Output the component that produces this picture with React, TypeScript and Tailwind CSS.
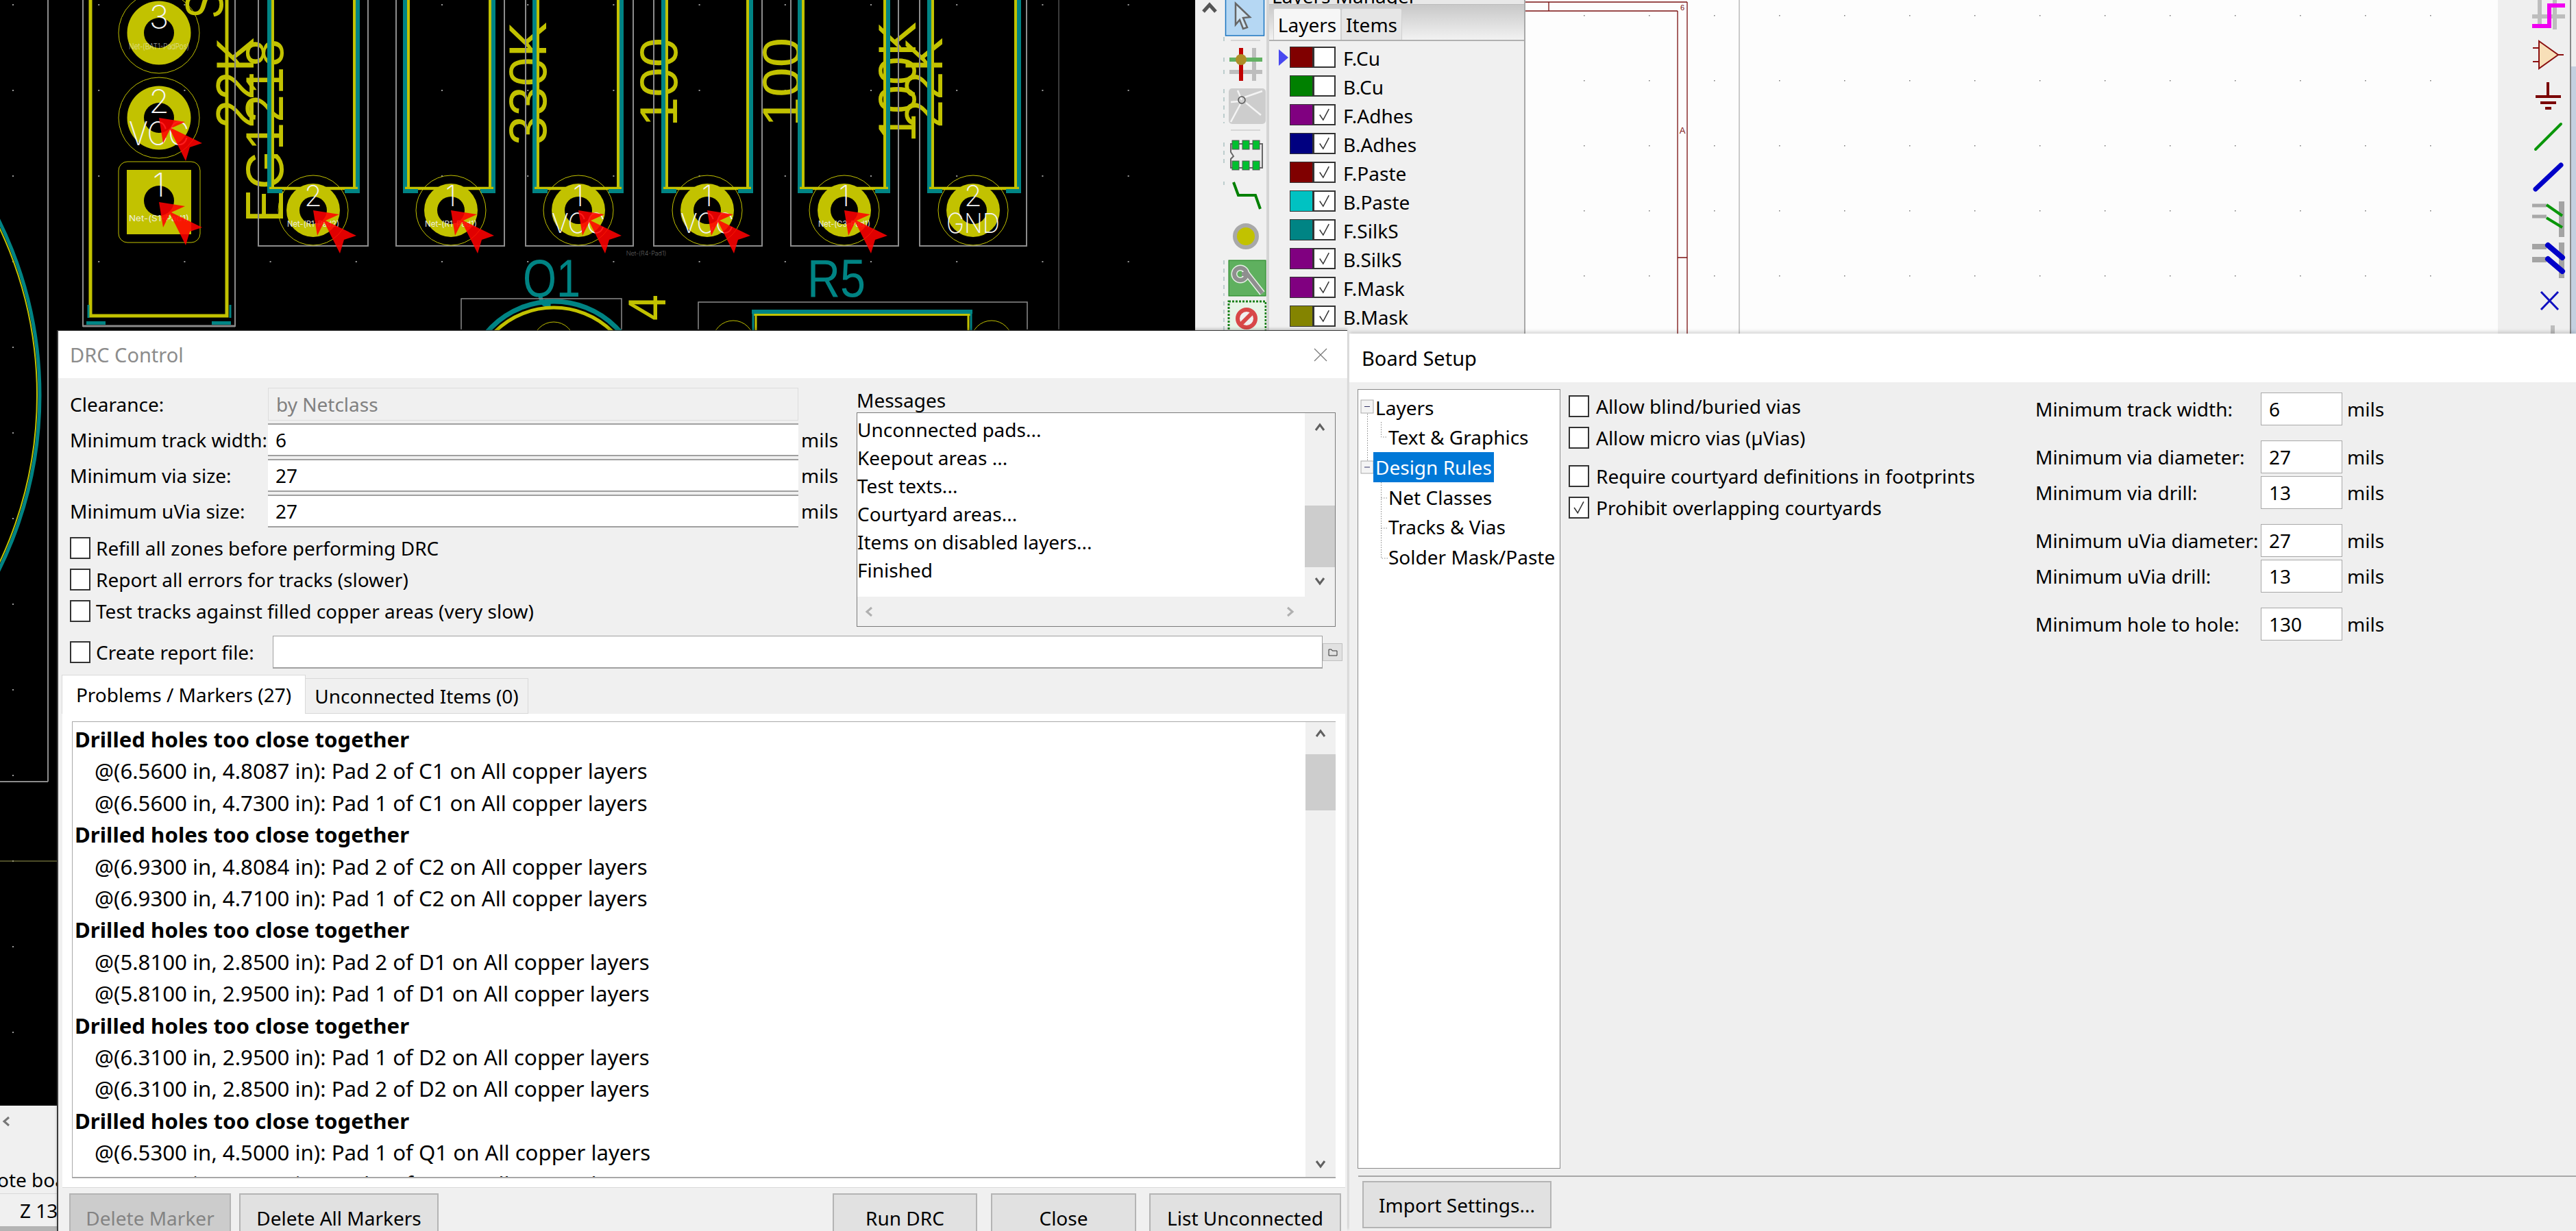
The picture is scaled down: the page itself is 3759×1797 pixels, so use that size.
import React from 'react';

// ---- PCB canvas ----

const YEL = '#c2c200';
const TEAL = '#008484';

const gridX = Array.from({ length: 14 }, (_, i) => 19 + i * 125.2);
const gridY = Array.from({ length: 13 }, (_, i) => 7 + i * 125);

const ROW_PADS = [
  { cx: 457, num: '2', net: 'Net-(R1-Pad2)', marker: true },
  { cx: 658, num: '1', net: 'Net-(R1-Pad1)', marker: true },
  { cx: 844, num: '1', big: 'VCC', marker: true },
  { cx: 1032, num: '1', big: 'VCC', marker: true },
  { cx: 1232, num: '1', net: 'Net-(C3-Pad1)', marker: true },
  { cx: 1420, num: '2', big: 'GND', marker: false },
];

const COURTS = [
  [377, 537],
  [578, 736],
  [767, 924],
  [954, 1112],
  [1154, 1311],
  [1342, 1498],
];

const SILK = [
  [393, 522],
  [591, 720],
  [780, 907],
  [968, 1096],
  [1167, 1296],
  [1356, 1487],
];

function Marker({ x, y }: { x: number; y: number }) {
  return (
    <polygon
      transform={`translate(${x} ${y})`}
      points="0,0 38,6 18,15 63,37 45,43 39,63 16,17 6,37"
      fill="#ff0000"
      fillOpacity="0.88"
    />
  );
}

function SilkLabel({ t, x, y, len }: { t: string; x: number; y: number; len: number }) {
  return (
    <text
      transform={`translate(${x} ${y}) rotate(-90)`}
      fontFamily="Liberation Sans"
      fontSize="78"
      fill={YEL}
      textLength={len}
      lengthAdjust="spacingAndGlyphs"
    >
      {t}
    </text>
  );
}

function PcbCanvas() {
  return (
    <svg width="1744" height="1614" className="block bg-black">
      {gridX.map((x) =>
        gridY.map((y) => <rect key={`${x}-${y}`} x={x - 1} y={y - 1} width="2" height="2" fill="#999" />),
      )}

      {/* board edge and courtyards */}
      <line x1="70" y1="0" x2="70" y2="1141" stroke="#8c8c8c" strokeWidth="2" />
      <line x1="0" y1="1141" x2="70" y2="1141" stroke="#8c8c8c" strokeWidth="2" />
      <line x1="0" y1="1257" x2="85" y2="1257" stroke="#9a9a50" strokeWidth="1" />
      <line x1="1545" y1="0" x2="1545" y2="481" stroke="#777" strokeWidth="1" />
      <circle cx="-518" cy="577" r="576" fill="none" stroke={TEAL} strokeWidth="5" />
      <circle cx="-518" cy="577" r="572" fill="none" stroke={YEL} strokeWidth="2" />

      {/* silk text, under the outlines */}
      <SilkLabel t="EG1218" x={413} y={325} len={268} />
      <SilkLabel t="22K" x={370} y={187} len={132} />
      <SilkLabel t="S" x={325} y={27} len={40} />
      <SilkLabel t="330K" x={797} y={212} len={180} />
      <SilkLabel t="100" x={988} y={185} len={130} />
      <SilkLabel t="100" x={1167} y={185} len={130} />
      <SilkLabel t="100K" x={1336} y={208} len={176} />
      <SilkLabel t="22K" x={1375} y={187} len={132} />
      <SilkLabel t="4" x={971} y={468} len={38} />

      {/* connector */}
      <path d="M121 0V476H343V0" fill="none" stroke="#8c8c8c" strokeWidth="2" />
      <line x1="121" y1="476" x2="343" y2="476" stroke="#8c8c8c" strokeWidth="3" />
      <path d="M132 0V461H331V0" fill="none" stroke={YEL} strokeWidth="5" />
      <rect x="126" y="469" width="28" height="5" fill={TEAL} />
      <rect x="309" y="469" width="28" height="5" fill={TEAL} />
      <path d="M129 445V464M336 445V464" stroke={TEAL} strokeWidth="3" />

      {[48, 172].map((cy) => (
        <g key={cy}>
          <circle cx="232" cy={cy} r="59" fill="none" stroke={YEL} strokeWidth="1" />
          <circle cx="232" cy={cy} r="46.5" fill={YEL} />
          <circle cx="232" cy={cy} r="22" fill="#000" />
        </g>
      ))}
      <rect x="173" y="236" width="119" height="118" rx="13" fill="none" stroke={YEL} strokeWidth="1" />
      <rect x="185" y="248" width="94" height="94" fill={YEL} />
      <circle cx="232" cy="293" r="22" fill="#000" />

      {/* silkscreen outlines */}
      {SILK.map(([l, r]) => (
        <g key={l}>
          <path d={`M${l} 0V281M${r} 0V281`} stroke={TEAL} strokeWidth="6" />
          <path d={`M${l + 5} 0V275M${r - 5} 0V275`} stroke={YEL} strokeWidth="4" />
          <line x1={l} y1="275" x2={r} y2="275" stroke={YEL} strokeWidth="4.5" />
          <rect x={l - 3} y="276" width="22" height="6" fill={TEAL} />
          <rect x={r - 19} y="276" width="22" height="6" fill={TEAL} />
        </g>
      ))}

      {/* resistor courtyards */}
      {COURTS.map(([l, r]) => (
        <path key={l} d={`M${l} 0V359H${r}V0`} fill="none" stroke="#8c8c8c" strokeWidth="2" />
      ))}

      {/* pads */}
      {ROW_PADS.map((p) => (
        <g key={p.cx}>
          <circle cx={p.cx} cy="307" r="51" fill="none" stroke={YEL} strokeWidth="1" />
          <circle cx={p.cx} cy="307" r="39" fill={YEL} />
          <circle cx={p.cx} cy="307" r="20" fill="#000" />
        </g>
      ))}

      {/* pad labels */}
      <g fontFamily="Inter, Liberation Sans" fontWeight="200" fill="#f4f4f4" textAnchor="middle">
        <text x="232" y="42" fontSize="48">3</text>
        <text x="232" y="72" fontSize="12" textLength="88" lengthAdjust="spacingAndGlyphs" opacity="0.85">Net-(BAT1-PadPos)</text>
        <text x="232" y="165" fontSize="48">2</text>
        <text x="232" y="212" fontSize="48" textLength="88" lengthAdjust="spacingAndGlyphs">VCC</text>
        <text x="232" y="287" fontSize="48">1</text>
        <text x="232" y="323" fontSize="12" fontWeight="400" textLength="88" lengthAdjust="spacingAndGlyphs" opacity="0.9">Net-(S1-Pad1)</text>
        {ROW_PADS.map((p) => (
          <g key={p.cx}>
            <text x={p.cx} y="301" fontSize="42">{p.num}</text>
            {p.net && <text x={p.cx} y="331" fontSize="12" fontWeight="400" textLength="76" lengthAdjust="spacingAndGlyphs" opacity="0.9">{p.net}</text>}
            {p.big && (
              <text x={p.cx} y="340" fontSize="40" textLength="78" lengthAdjust="spacingAndGlyphs">{p.big}</text>
            )}
          </g>
        ))}
        <text x="943" y="373" fontSize="9" opacity="0.5">Net-(R4-Pad1)</text>
      </g>

      {/* markers */}
      <Marker x={232} y={172} />
      <Marker x={232} y={295} />
      {ROW_PADS.filter((p) => p.marker).map((p) => (
        <Marker key={p.cx} x={p.cx} y={307} />
      ))}

      {/* Q1 / R5 */}
      <g fontFamily="Liberation Sans" fontSize="78" fill={TEAL}>
        <text x="763" y="433" textLength="84" lengthAdjust="spacingAndGlyphs">Q1</text>
        <text x="1178" y="433" textLength="85" lengthAdjust="spacingAndGlyphs">R5</text>
      </g>
      <path d="M673 481V436H907V481" fill="none" stroke="#8c8c8c" strokeWidth="1.5" />
      <path d="M1019 481V441H1499V481" fill="none" stroke="#8c8c8c" strokeWidth="1.5" />
      <circle cx="808" cy="568" r="128" fill="none" stroke={TEAL} strokeWidth="7" />
      <circle cx="808" cy="571" r="122" fill="none" stroke={YEL} strokeWidth="5" />
      <circle cx="808" cy="500" r="30" fill="none" stroke={YEL} strokeWidth="1" />
      <rect x="1097" y="452" width="322" height="6" fill={TEAL} />
      <rect x="1099" y="458" width="318" height="3" fill={YEL} />
      <path d="M1099 455V482M1417 455V482" stroke={TEAL} strokeWidth="3" />
      <path d="M1103 461V482M1413 461V482" stroke={YEL} strokeWidth="3" />
      <circle cx="1070" cy="498" r="30" fill="none" stroke={YEL} strokeWidth="1" />
      <circle cx="1447" cy="498" r="30" fill="none" stroke={YEL} strokeWidth="1" />
    </svg>
  );
}

// ---- toolbars ----

function LeftToolbar() {
  return (
    <div className="flex h-full w-[108px] shrink-0 flex-col border-r-4 border-[#d4d4d4] bg-[#f0f0f0]">
      <svg width="104" height="487" viewBox="0 0 104 487">
        <path d="M12 17L21 7L30 17" fill="none" stroke="#555" strokeWidth="5" />
        <path d="M42 60V54M42 84V90M42 102V108M42 130V180M42 208V240M42 265V270M42 380V432M42 440V482" stroke="#8aa" strokeWidth="1" strokeDasharray="6 6" fill="none" />
        <rect x="44.5" y="-2" width="56" height="54" fill="#b5d7f3" stroke="#1b74c0" strokeWidth="1.5" />
        <path d="M59 5L80 25L70 26L76 40L70 42L65 29L59 36Z" fill="#cfe3f2" stroke="#666" strokeWidth="2.5" />
        <line x1="52" y1="59" x2="95" y2="59" stroke="#bbb" />
        <line x1="52" y1="190" x2="95" y2="190" stroke="#bbb" />
        <rect x="83" y="70" width="6" height="48" fill="#bdbdbd" />
        <rect x="50" y="102" width="48" height="6" fill="#bdbdbd" />
        <rect x="50" y="84" width="48" height="6" fill="#62b162" />
        <rect x="64" y="70" width="6" height="48" fill="#c00000" />
        <circle cx="67" cy="87" r="8" fill="#ac8e28" />
        <rect x="49" y="129" width="54" height="52" rx="5" fill="#cdcdcd" />
        <path d="M68 146L62 132M72 142L98 133M74 150L96 168M66 152L52 178M64 148L52 149" stroke="#f4f4f4" strokeWidth="2.5" />
        <circle cx="68" cy="146" r="5" fill="none" stroke="#555" strokeWidth="1.5" />
        <path d="M52 210H98V245H52V232L56 228L52 222Z" fill="#ececec" stroke="#666" strokeWidth="2" />
        <rect x="54" y="205" width="10" height="13" fill="#00c030" stroke="#555" />
        <rect x="69" y="205" width="10" height="13" fill="#00c030" stroke="#555" />
        <rect x="84" y="205" width="10" height="13" fill="#00c030" stroke="#555" />
        <rect x="54" y="235" width="10" height="13" fill="#00c030" stroke="#555" />
        <rect x="69" y="235" width="10" height="13" fill="#00c030" stroke="#555" />
        <rect x="84" y="235" width="10" height="13" fill="#00c030" stroke="#555" />
        <path d="M56 266L63 285H88L95 305" fill="none" stroke="#008000" strokeWidth="4" />
        <circle cx="74" cy="345" r="16" fill="#c2c200" stroke="#a8a8a8" strokeWidth="6" />
        <rect x="49" y="380" width="54" height="52" fill="#5fb05f" stroke="#188018" />
        <path d="M98 428L76 400H68" fill="none" stroke="#e6f2e6" strokeWidth="9" />
        <circle cx="66" cy="400" r="9" fill="none" stroke="#e6f2e6" strokeWidth="9" />
        <path d="M98 428L76 400H68" fill="none" stroke="#8f8f8f" strokeWidth="6" />
        <circle cx="66" cy="400" r="9" fill="none" stroke="#8f8f8f" strokeWidth="6" />
        <rect x="49" y="440" width="54" height="44" fill="#e8f4e8" stroke="#188018" strokeWidth="3" strokeDasharray="3 2" />
        <circle cx="75" cy="465" r="13" fill="#f0f0f0" stroke="#d84848" strokeWidth="6" />
        <line x1="66" y1="474" x2="84" y2="456" stroke="#d84848" strokeWidth="6" />
      </svg>
    </div>
  );
}

const LAYERS = [
  { name: 'F.Cu', color: 'bg-[#800000]', on: false },
  { name: 'B.Cu', color: 'bg-[#008000]', on: false },
  { name: 'F.Adhes', color: 'bg-[#800080]', on: true },
  { name: 'B.Adhes', color: 'bg-[#000080]', on: true },
  { name: 'F.Paste', color: 'bg-[#800000]', on: true },
  { name: 'B.Paste', color: 'bg-[#00c2c2]', on: true },
  { name: 'F.SilkS', color: 'bg-[#008484]', on: true },
  { name: 'B.SilkS', color: 'bg-[#800080]', on: true },
  { name: 'F.Mask', color: 'bg-[#800080]', on: true },
  { name: 'B.Mask', color: 'bg-[#848400]', on: true },
];

function TickMark() {
  return (
    <svg viewBox="0 0 30 32" className="h-full w-full">
      <path d="M7 16L13 25L23 6" fill="none" stroke="#333" strokeWidth="1.8" />
    </svg>
  );
}

function LayersManager() {
  return (
    <div className="flex h-full w-[374px] shrink-0 flex-col border-r-2 border-[#a8a8a8] bg-[#f0f0f0]">
      <div className="h-[7px] overflow-hidden border-b border-[#bbb] bg-[#e8e8e8] pl-[4px]">
        <div className="-mt-[20px] text-black">Layers Manager</div>
      </div>
      <div className="flex h-[53px] items-end gap-0 border-b-2 border-[#b0b0b0] bg-gradient-to-b from-[#c8c8c8] to-[#f2f2f2] pl-[6px]">
        <div className="flex h-[46px] w-[99px] items-center justify-center rounded-t-[3px] border border-b-0 border-[#d0d0d0] bg-[#f6f6f6]">Layers</div>
        <div className="flex h-[46px] w-[89px] items-center justify-center rounded-t-[3px] border border-b-0 border-[#d0d0d0] bg-[#e6e6e6]">Items</div>
      </div>
      <div className="flex flex-col gap-[11px] pt-[8px]">
        {LAYERS.map((l, i) => (
          <div key={l.name} className="flex h-[31px] items-center">
            <div className="flex w-[30px] justify-end pr-[2px]">
              {i === 0 && (
                <svg width="14" height="24">
                  <path d="M0 0L14 12L0 24Z" fill="#4848f0" />
                </svg>
              )}
            </div>
            <div className={`h-[31px] w-[34px] border border-[#333] ${l.color}`} />
            <div className="h-[31px] w-[33px] border-2 border-[#333] bg-white">{l.on && <TickMark />}</div>
            <span className="ml-[11px] translate-y-[1px]">{l.name}</span>
          </div>
        ))}
      </div>
    </div>
  );
}

const sheetDotsX = Array.from({ length: 14 }, (_, i) => 85 + i * 95);
const sheetDotsY = [22, 117, 212, 307, 402];

function SheetArea() {
  return (
    <div className="h-full w-[1419px] shrink-0 bg-[#fdfdfd]">
      <svg width="1419" height="487" className="block">
        {sheetDotsX.map((x) =>
          sheetDotsY.map((y) => <rect key={`${x}-${y}`} x={x} y={y} width="1.5" height="1.5" fill="#777" />),
        )}
        <path d="M0 3H236M0 16H222M34 3V16M222 16V487M236 3V487M222 376H236" fill="none" stroke="#7a1010" strokeWidth="1.3" />
        <line x1="312" y1="0" x2="312" y2="487" stroke="#999" strokeWidth="1" />
        <text x="229" y="15" fontSize="11" textAnchor="middle" fill="#7a1010" fontFamily="Liberation Sans">6</text>
        <text x="229" y="195" fontSize="13" textAnchor="middle" fill="#7a1010" fontFamily="Liberation Sans">A</text>
      </svg>
    </div>
  );
}

function RightToolbar() {
  return (
    <div className="flex h-full flex-1 bg-[#efefef]">
      <svg width="105" height="487" className="shrink-0">
        <g transform="translate(-3645 0)">
          <path d="M3706 0V40M3728 0V43M3695 24H3743" stroke="#bdbdbd" strokeWidth="6" fill="none" />
          <path d="M3695 38H3720V8H3743" stroke="#f000f0" strokeWidth="6" fill="none" />
          <path d="M3696 70H3706M3696 90H3706M3733 80H3741" stroke="#8b1010" strokeWidth="2" />
          <path d="M3705 60L3733 80L3705 100Z" fill="#f8dfb8" stroke="#8b1010" strokeWidth="2" />
          <path d="M3718 120V141" stroke="#7a0000" strokeWidth="4" />
          <path d="M3700 141H3737M3707 150H3730M3714 158H3723" stroke="#7a0000" strokeWidth="4" />
          <line x1="3700" y1="218" x2="3737" y2="181" stroke="#0a960a" strokeWidth="4" strokeLinecap="round" />
          <line x1="3700" y1="276" x2="3737" y2="241" stroke="#0000c8" strokeWidth="7" strokeLinecap="round" />
          <path d="M3695 300H3716M3695 316H3716" stroke="#a8a8a8" strokeWidth="5" />
          <rect x="3734" y="294" width="8" height="52" fill="#a4a4a4" />
          <path d="M3716 299L3739 315M3716 318L3739 332" stroke="#0a960a" strokeWidth="4" />
          <path d="M3695 360H3716M3695 379H3716" stroke="#a4a4a4" strokeWidth="8" />
          <rect x="3734" y="354" width="8" height="52" fill="#a4a4a4" />
          <path d="M3718 358L3739 376M3718 378L3739 396" stroke="#0000c8" strokeWidth="8" strokeLinecap="round" />
          <path d="M3708 426L3733 452M3733 426L3708 452" stroke="#1010c0" strokeWidth="3" />
          <rect x="3722" y="475" width="6" height="12" fill="#bcbcbc" />
        </g>
      </svg>
      <div className="h-full w-[2px] bg-[#8a8a8a]" />
      <div className="flex h-full flex-1 flex-col">
        <div className="h-[97px] bg-[#efefef]" />
        <div className="flex-1 bg-[#c4d0e0]" />
      </div>
    </div>
  );
}

// ---- shared dialog bits ----

function CheckBox({ checked = false }: { checked?: boolean }) {
  return (
    <div className="h-[32px] w-[30px] shrink-0 border-2 border-[#333] bg-white">{checked && <TickMark />}</div>
  );
}

function CheckRow({ label, checked, labelGap = 'ml-[8px]' }: { label: string; checked?: boolean; labelGap?: string }) {
  return (
    <div className="flex h-[32px] items-center">
      <CheckBox checked={checked} />
      <span className={`whitespace-nowrap ${labelGap}`}>{label}</span>
    </div>
  );
}

function Chev({ dir, color = '#606060' }: { dir: 'up' | 'down' | 'left' | 'right'; color?: string }) {
  const d = {
    up: 'M2 11L8 3L14 11',
    down: 'M2 3L8 11L14 3',
    left: 'M11 2L4 8L11 14',
    right: 'M5 2L12 8L5 14',
  }[dir];
  return (
    <svg width="16" height="16" viewBox="0 0 16 16" className="block">
      <path d={d} fill="none" stroke={color} strokeWidth="3" />
    </svg>
  );
}

function Btn({ label, className = '', disabled = false }: { label: string; className?: string; disabled?: boolean }) {
  return (
    <div
      className={`flex h-[72px] shrink-0 items-center justify-center border-2 border-[#b4b4b4] ${
        disabled ? 'bg-[#cccccc] text-[#838383]' : 'bg-[#e1e1e1] text-black'
      } ${className}`}
    >
      {label}
    </div>
  );
}

// ---- DRC Control ----

function DrcField({ label, value, disabled = false }: { label: string; value: string; disabled?: boolean }) {
  return (
    <div className="flex h-[48px] items-center">
      <span className="w-[289px] shrink-0 whitespace-nowrap">{label}</span>
      <div
        className={`flex h-full w-[774px] items-center pl-[11px] ${
          disabled
            ? 'border border-[#dcdcdc] bg-[#f0f0f0] text-[#808080]'
            : 'border-b-2 border-t-2 border-[#a0a0a0] bg-white'
        }`}
      >
        {value}
      </div>
      {!disabled && <span className="ml-[4px]">mils</span>}
    </div>
  );
}

const MESSAGES = ['Unconnected pads...', 'Keepout areas ...', 'Test texts...', 'Courtyard areas...', 'Items on disabled layers...', 'Finished'];

const MARKERS = [
  ['@(6.5600 in, 4.8087 in): Pad 2 of C1 on All copper layers', '@(6.5600 in, 4.7300 in): Pad 1 of C1 on All copper layers'],
  ['@(6.9300 in, 4.8084 in): Pad 2 of C2 on All copper layers', '@(6.9300 in, 4.7100 in): Pad 1 of C2 on All copper layers'],
  ['@(5.8100 in, 2.8500 in): Pad 2 of D1 on All copper layers', '@(5.8100 in, 2.9500 in): Pad 1 of D1 on All copper layers'],
  ['@(6.3100 in, 2.9500 in): Pad 1 of D2 on All copper layers', '@(6.3100 in, 2.8500 in): Pad 2 of D2 on All copper layers'],
  ['@(6.5300 in, 4.5000 in): Pad 1 of Q1 on All copper layers', '@(6.5300 in, 4.4000 in): Pad 2 of Q1 on All copper layers'],
];

function DrcDialog() {
  return (
    <div className="absolute left-[83px] top-[482px] flex h-[1315px] w-[1883px] flex-col overflow-hidden border-l-2 border-t border-[#3a3a3a] bg-[#f0f0f0] shadow-[0_-2px_4px_rgba(0,0,0,0.2)]">
      <div className="flex h-[69px] shrink-0 items-center justify-between bg-white pl-[17px] pr-[28px] text-[29px] text-[#8c8c8c]">
        <span>DRC Control</span>
        <svg width="22" height="22">
          <path d="M2 2L20 20M20 2L2 20" stroke="#777" strokeWidth="1.2" />
        </svg>
      </div>

      <div className="flex shrink-0 items-start pl-[17px] pt-[14px]">
        <div className="flex w-[1148px] shrink-0 flex-col">
          <div className="flex flex-col gap-[4px]">
            <DrcField label="Clearance:" value="by Netclass" disabled />
            <DrcField label="Minimum track width:" value="6" />
            <DrcField label="Minimum via size:" value="27" />
            <DrcField label="Minimum uVia size:" value="27" />
          </div>
          <div className="mt-[14px] flex flex-col gap-[14px]">
            <CheckRow label="Refill all zones before performing DRC" />
            <CheckRow label="Report all errors for tracks (slower)" />
            <CheckRow label="Test tracks against filled copper areas (very slow)" />
          </div>
        </div>
        <div className="flex flex-col">
          <div className="flex h-[36px] items-center">Messages</div>
          <div className="flex h-[313px] w-[699px] flex-col border border-[#7a7a7a] bg-white">
            <div className="flex h-[268px] shrink-0">
              <div className="flex-1 pt-[4px]">
                {MESSAGES.map((m) => (
                  <div key={m} className="h-[41px] leading-[41px]">{m}</div>
                ))}
              </div>
              <div className="relative flex w-[44px] flex-col items-center justify-between bg-[#f0f0f0] py-[14px]">
                <Chev dir="up" />
                <div className="absolute left-0 top-[135px] h-[90px] w-full bg-[#cdcdcd]" />
                <Chev dir="down" />
              </div>
            </div>
            <div className="flex flex-1 items-center justify-between bg-[#f0f0f0] pl-[10px] pr-[58px]">
              <Chev dir="left" color="#b0b0b0" />
              <Chev dir="right" color="#b0b0b0" />
            </div>
          </div>
        </div>
      </div>

      <div className="mt-[13px] flex h-[48px] shrink-0 items-center pl-[17px]">
        <div className="w-[296px] shrink-0">
          <CheckRow label="Create report file:" />
        </div>
        <div className="h-full w-[1532px] shrink-0 border border-b-2 border-[#a0a0a0] bg-white" />
        <div className="flex h-[26px] w-[29px] shrink-0 items-center justify-center border border-[#c0c0c0] bg-[#e1e1e1]">
          <svg width="14" height="12">
            <path d="M1 2H5L6 4H13V11H1Z" fill="none" stroke="#333" />
          </svg>
        </div>
      </div>

      <div className="mt-[9px] flex h-[57px] shrink-0 items-end pl-[5px]">
        <div className="flex h-[57px] w-[356px] items-center justify-center border border-b-0 border-[#d9d9d9] bg-white">
          Problems / Markers (27)
        </div>
        <div className="flex h-[52px] w-[325px] items-center justify-center border border-l-0 border-[#d9d9d9] bg-[#f0f0f0]">
          Unconnected Items (0)
        </div>
      </div>

      <div className="ml-[6px] mr-[3px] h-[692px] shrink-0 border-b border-[#d9d9d9] bg-white px-[14px] pt-[11px]">
        <div className="flex h-[667px] overflow-hidden border-b-2 border-l border-t border-[#a8a8a8]">
          <div className="flex-1 overflow-hidden pt-[2px] text-[31.2px]">
            {MARKERS.map((pair, i) => (
              <div key={i}>
                <div className="h-[46.4px] whitespace-nowrap pl-[3px] font-bold leading-[46.4px]">Drilled holes too close together</div>
                {pair.map((p) => (
                  <div key={p} className="h-[46.4px] whitespace-nowrap pl-[32px] leading-[46.4px]">{p}</div>
                ))}
              </div>
            ))}
          </div>
          <div className="relative flex w-[44px] shrink-0 flex-col items-center justify-between bg-[#f0f0f0] py-[10px]">
            <Chev dir="up" />
            <div className="absolute left-0 top-[47px] h-[82px] w-full bg-[#cdcdcd]" />
            <Chev dir="down" />
          </div>
        </div>
      </div>

      <div className="mt-[8px] flex shrink-0 gap-[12px] pl-[16px]">
        <Btn label="Delete Marker" className="w-[236px]" disabled />
        <Btn label="Delete All Markers" className="w-[291px]" />
        <Btn label="Run DRC" className="ml-[563px] w-[211px]" />
        <Btn label="Close" className="ml-[8px] w-[212px]" />
        <Btn label="List Unconnected" className="ml-[7px] w-[280px]" />
      </div>
    </div>
  );
}

// ---- Board Setup ----

const TREE = [
  { label: 'Layers', indent: 'pl-[22px]' },
  { label: 'Text & Graphics', indent: 'pl-[41px]' },
  { label: 'Design Rules', indent: 'pl-[22px]', active: true },
  { label: 'Net Classes', indent: 'pl-[41px]' },
  { label: 'Tracks & Vias', indent: 'pl-[41px]' },
  { label: 'Solder Mask/Paste', indent: 'pl-[41px]' },
];

function RuleRow({ label, value, gap }: { label: string; value: string; gap: string }) {
  return (
    <div className={`flex h-[48px] items-center ${gap}`}>
      <span className="w-[329px] shrink-0 whitespace-nowrap">{label}</span>
      <div className="flex h-full w-[119px] items-center border border-[#a8a8a8] bg-white pl-[11px]">{value}</div>
      <span className="ml-[7px]">mils</span>
    </div>
  );
}

function BoardSetup() {
  return (
    <div className="absolute left-[1969px] top-[487px] flex h-[1310px] w-[1790px] flex-col overflow-hidden bg-[#efefef] shadow-[0_-3px_5px_rgba(0,0,0,0.15)]">
      <div className="flex h-[71px] shrink-0 items-center bg-white pl-[18px] text-[29px] text-black">Board Setup</div>
      <div className="flex h-[1158px] shrink-0 pl-[12px] pt-[10px]">
        <div className="relative h-[1138px] w-[296px] shrink-0 border border-[#8a8a8a] bg-white pt-[4px]">
          <svg width="60" height="260" className="absolute left-0 top-0">
            <path d="M13.5 35V104M33.5 47V69H43M33.5 135V246H43M33.5 158H43M33.5 202H43" fill="none" stroke="#888" strokeDasharray="1.5 2" />
            <rect x="4" y="15" width="18" height="19" fill="#f4f4f4" stroke="#aaa" />
            <path d="M9 24.5H17" stroke="#336" />
            <rect x="4" y="104" width="18" height="18" fill="#f4f4f4" stroke="#aaa" />
            <path d="M9 113H17" stroke="#336" />
          </svg>
          {TREE.map((t) => (
            <div key={t.label} className={`relative flex h-[43.6px] items-center ${t.indent}`}>
              <span className={`whitespace-nowrap px-[3px] ${t.active ? 'bg-[#0078d7] leading-[44px] text-white' : ''}`}>{t.label}</span>
            </div>
          ))}
        </div>
        <div className="ml-[12px] flex w-[681px] shrink-0 flex-col pt-[9px]">
          <CheckRow label="Allow blind/buried vias" labelGap="ml-[10px]" />
          <div className="mt-[14px]"><CheckRow label="Allow micro vias (µVias)" labelGap="ml-[10px]" /></div>
          <div className="mt-[24px]"><CheckRow label="Require courtyard definitions in footprints" labelGap="ml-[10px]" /></div>
          <div className="mt-[14px]"><CheckRow label="Prohibit overlapping courtyards" checked labelGap="ml-[10px]" /></div>
        </div>
        <div className="flex flex-col pt-[5px]">
          <RuleRow label="Minimum track width:" value="6" gap="" />
          <RuleRow label="Minimum via diameter:" value="27" gap="mt-[22px]" />
          <RuleRow label="Minimum via drill:" value="13" gap="mt-[4px]" />
          <RuleRow label="Minimum uVia diameter:" value="27" gap="mt-[22px]" />
          <RuleRow label="Minimum uVia drill:" value="13" gap="mt-[4px]" />
          <RuleRow label="Minimum hole to hole:" value="130" gap="mt-[22px]" />
        </div>
      </div>
      <div className="ml-[13px] border-t-2 border-[#a8a8a8] pl-[6px] pt-[6px]">
        <div className="flex h-[69px] w-[276px] items-center justify-center border-2 border-[#b4b4b4] bg-[#e1e1e1]">Import Settings...</div>
      </div>
    </div>
  );
}

export default function App() {
  return (
    <div className="relative flex h-[1797px] w-[3759px] overflow-hidden bg-[#f0f0f0] font-['Noto_Sans',sans-serif] text-[28px] leading-none text-black">
      <div className="flex h-full w-[1744px] shrink-0 flex-col">
        <PcbCanvas />
        <div className="flex flex-1 flex-col overflow-hidden bg-[#f0f0f0]">
          <div className="flex h-[46px] items-center pl-[2px]">
            <Chev dir="left" color="#777" />
          </div>
          <div className="flex h-[82px] items-end whitespace-nowrap pb-[6px]">
            <span className="-ml-[4px]">ote board</span>
          </div>
          <div className="flex h-[48px] items-center border-t border-[#d8d8d8] pl-[29px]">Z 13</div>
          <div className="flex-1 bg-[#b4b4b4]" />
        </div>
      </div>
      <LeftToolbar />
      <LayersManager />
      <SheetArea />
      <RightToolbar />
      <DrcDialog />
      <BoardSetup />
    </div>
  );
}
